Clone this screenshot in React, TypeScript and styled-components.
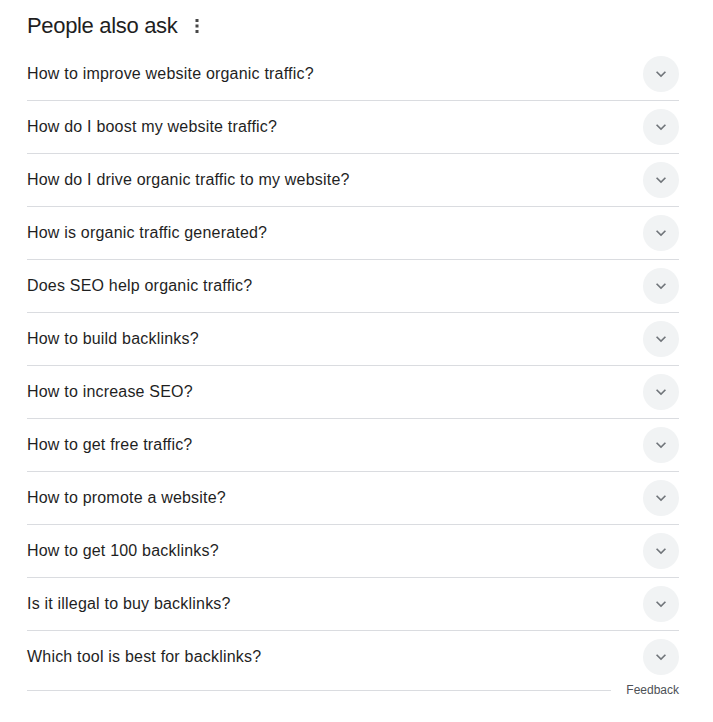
import * as React from "react"
import styled, { createGlobalStyle } from "styled-components"

const GlobalStyle = createGlobalStyle`
  body {
    margin: 0;
    background: #ffffff;
    font-family: "Liberation Sans", Arial, sans-serif;
  }
`

const ScRoot = styled.div`
  width: 652px;
  padding-left: 27px;
`

const ScHeader = styled.div`
  height: 48px;
  display: flex;
  align-items: center;
  gap: 14px;
  padding-top: 3px;
  box-sizing: border-box;
`

const ScTitle = styled.h2`
  margin: 0;
  font-size: 22px;
  font-weight: 400;
  letter-spacing: -0.33px;
  color: #1f1f1f;
`

const ScMenu = styled.button`
  width: 12px;
  height: 24px;
  border: 0;
  padding: 0;
  background: none;
  color: #474747;
  display: flex;
  align-items: center;
  justify-content: center;
`

const ScRow = styled.div<{ $last?: boolean }>`
  height: 52px;
  display: flex;
  align-items: center;
  justify-content: space-between;
  border-bottom: ${(p) => (p.$last ? "none" : "1px solid #dadce0")};
`

const ScQuestion = styled.span`
  font-size: 16px;
  letter-spacing: 0.2px;
  color: #1f1f1f;
`

const ScToggle = styled.div`
  width: 36px;
  height: 36px;
  border-radius: 50%;
  background: #f1f3f4;
  display: flex;
  align-items: center;
  justify-content: center;
  color: #70757a;
`

const ScFooter = styled.div`
  height: 14px;
  display: flex;
  align-items: center;
  gap: 15px;
`

const ScLine = styled.div`
  flex: 1;
  height: 1px;
  background: #dadce0;
`

const ScFeedback = styled.span`
  font-size: 12px;
  color: #4d5156;
`

const questions = [
  "How to improve website organic traffic?",
  "How do I boost my website traffic?",
  "How do I drive organic traffic to my website?",
  "How is organic traffic generated?",
  "Does SEO help organic traffic?",
  "How to build backlinks?",
  "How to increase SEO?",
  "How to get free traffic?",
  "How to promote a website?",
  "How to get 100 backlinks?",
  "Is it illegal to buy backlinks?",
  "Which tool is best for backlinks?",
]

const Chevron = () => (
  <svg width="20" height="20" viewBox="0 0 24 24" fill="currentColor">
    <path d="M16.59 8.59L12 13.17 7.41 8.59 6 10l6 6 6-6z" />
  </svg>
)

const Dots = () => (
  <svg width="4" height="16" viewBox="0 0 4 16" fill="currentColor">
    <rect x="0.5" y="1" width="3" height="3" />
    <rect x="0.5" y="6.5" width="3" height="3" />
    <rect x="0.5" y="12" width="3" height="3" />
  </svg>
)

const App: React.FC = () => (
  <>
    <GlobalStyle />
    <ScRoot>
      <ScHeader>
        <ScTitle>People also ask</ScTitle>
        <ScMenu aria-label="More options">
          <Dots />
        </ScMenu>
      </ScHeader>
      {questions.map((q, i) => (
        <ScRow key={q} $last={i === questions.length - 1}>
          <ScQuestion>{q}</ScQuestion>
          <ScToggle>
            <Chevron />
          </ScToggle>
        </ScRow>
      ))}
      <ScFooter>
        <ScLine />
        <ScFeedback>Feedback</ScFeedback>
      </ScFooter>
    </ScRoot>
  </>
)

export default App
